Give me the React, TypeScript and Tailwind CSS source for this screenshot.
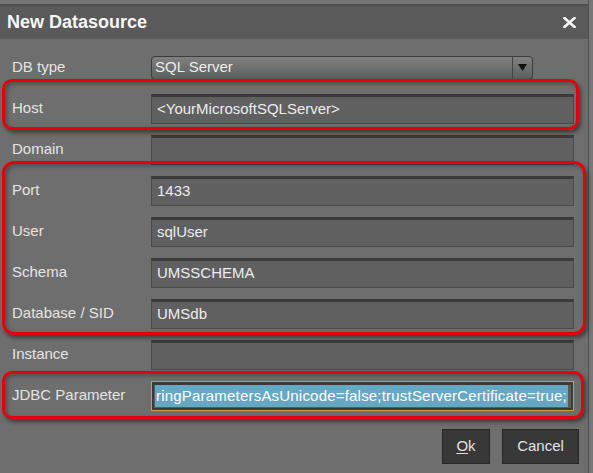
import React from "react";

const Field = ({ children }: { children?: React.ReactNode }) => (
  <div className="w-[423px] h-[30px] flex-none bg-[#606060] border border-[#4b4b4b] border-t-[3px] border-t-[#3b3b3b] flex items-center pl-[5px] text-[15px] text-[#ededed] overflow-hidden whitespace-nowrap">
    {children}
  </div>
);

const Row = ({ label, children }: { label: string; children?: React.ReactNode }) => (
  <div className="h-[41px] flex items-center">
    <div className="w-[151px] pl-[12px] text-[15px] text-[#e4e4e4] flex-none whitespace-nowrap">{label}</div>
    {children}
  </div>
);

export default function App() {
  return (
    <div className="relative w-[593px] h-[473px] bg-[#6e6e6e] overflow-hidden font-['Liberation_Sans',Arial,sans-serif]">
      <div className="flex h-full">
        <div className="w-[588px] flex-none flex flex-col">
          <div className="h-[4px] bg-[#767676]" />
          <div className="h-[2px] bg-[#4e4e4e]" />
          <div className="h-[33px] bg-[#5a5a5a] flex items-center justify-between pl-[7px] pr-[12px]">
            <span className="text-[18px] font-bold text-[#f7f7f7]">New Datasource</span>
            <svg width="13" height="11" viewBox="0 0 13 11">
              <path d="M1.5 1 L11.5 10 M11.5 1 L1.5 10" stroke="#f4f4f4" strokeWidth="2.6" strokeLinecap="square" />
            </svg>
          </div>
          <div className="h-[8px]" />
          <Row label="DB type">
            <div className="w-[382px] h-[24px] flex-none rounded-[4px] border border-[#3c3c3c] bg-gradient-to-b from-[#808080] to-[#5e5e5e] flex overflow-hidden">
              <div className="flex-1 flex items-center pl-[3px] text-[15px] text-[#ededed]">SQL Server</div>
              <div className="w-[20px] border-l border-[#444] flex items-center justify-center">
                <svg width="9" height="7" viewBox="0 0 9 7">
                  <polygon points="0,0 9,0 4.5,7" fill="#111" />
                </svg>
              </div>
            </div>
          </Row>
          <Row label="Host">
            <Field>&lt;YourMicrosoftSQLServer&gt;</Field>
          </Row>
          <Row label="Domain">
            <Field />
          </Row>
          <Row label="Port">
            <Field>1433</Field>
          </Row>
          <Row label="User">
            <Field>sqlUser</Field>
          </Row>
          <Row label="Schema">
            <Field>UMSSCHEMA</Field>
          </Row>
          <Row label="Database / SID">
            <Field>UMSdb</Field>
          </Row>
          <Row label="Instance">
            <Field />
          </Row>
          <Row label="JDBC Parameter">
            <div className="w-[423px] h-[30px] flex-none border border-[#c9a23c] bg-[#3a3a3a] p-[2px] pt-[3px]">
              <div className="h-full bg-[#5a5a5a] flex items-center justify-end overflow-hidden whitespace-nowrap pr-[3px]">
                <span className="bg-[#64a8c4] text-white text-[15px] tracking-[0.2px] leading-[22px] px-[1px]">
                  ringParametersAsUnicode=false;trustServerCertificate=true;
                </span>
              </div>
            </div>
          </Row>
          <div className="flex justify-end gap-[12px] pr-[9px] mt-[13px]">
            <button className="w-[48px] h-[35px] bg-[#383838] border border-[#262626] text-[15px] text-[#e2e2e2]">
              <span className="underline underline-offset-2">O</span>k
            </button>
            <button className="w-[77px] h-[35px] bg-[#383838] border border-[#262626] text-[15px] text-[#e2e2e2]">
              Cancel
            </button>
          </div>
        </div>
        <div className="w-[1px] bg-[#4f4f4f]" />
        <div className="flex-1 bg-[#777777]" />
      </div>

      <div className="absolute left-[2px] top-[79px] w-[577px] h-[51px] border-[3px] border-[#e5000a] rounded-[10px] shadow-[2px_3px_4px_rgba(0,0,0,0.45),inset_2px_2px_4px_rgba(0,0,0,0.3)]" />
      <div className="absolute left-[2px] top-[161px] w-[584px] h-[174px] border-[3px] border-[#e5000a] rounded-[12px] shadow-[2px_3px_4px_rgba(0,0,0,0.45),inset_2px_2px_4px_rgba(0,0,0,0.3)]" />
      <div className="absolute left-[2px] top-[371px] w-[582px] h-[48px] border-[3px] border-[#e5000a] rounded-[10px] shadow-[2px_3px_4px_rgba(0,0,0,0.45),inset_2px_2px_4px_rgba(0,0,0,0.3)]" />
    </div>
  );
}
